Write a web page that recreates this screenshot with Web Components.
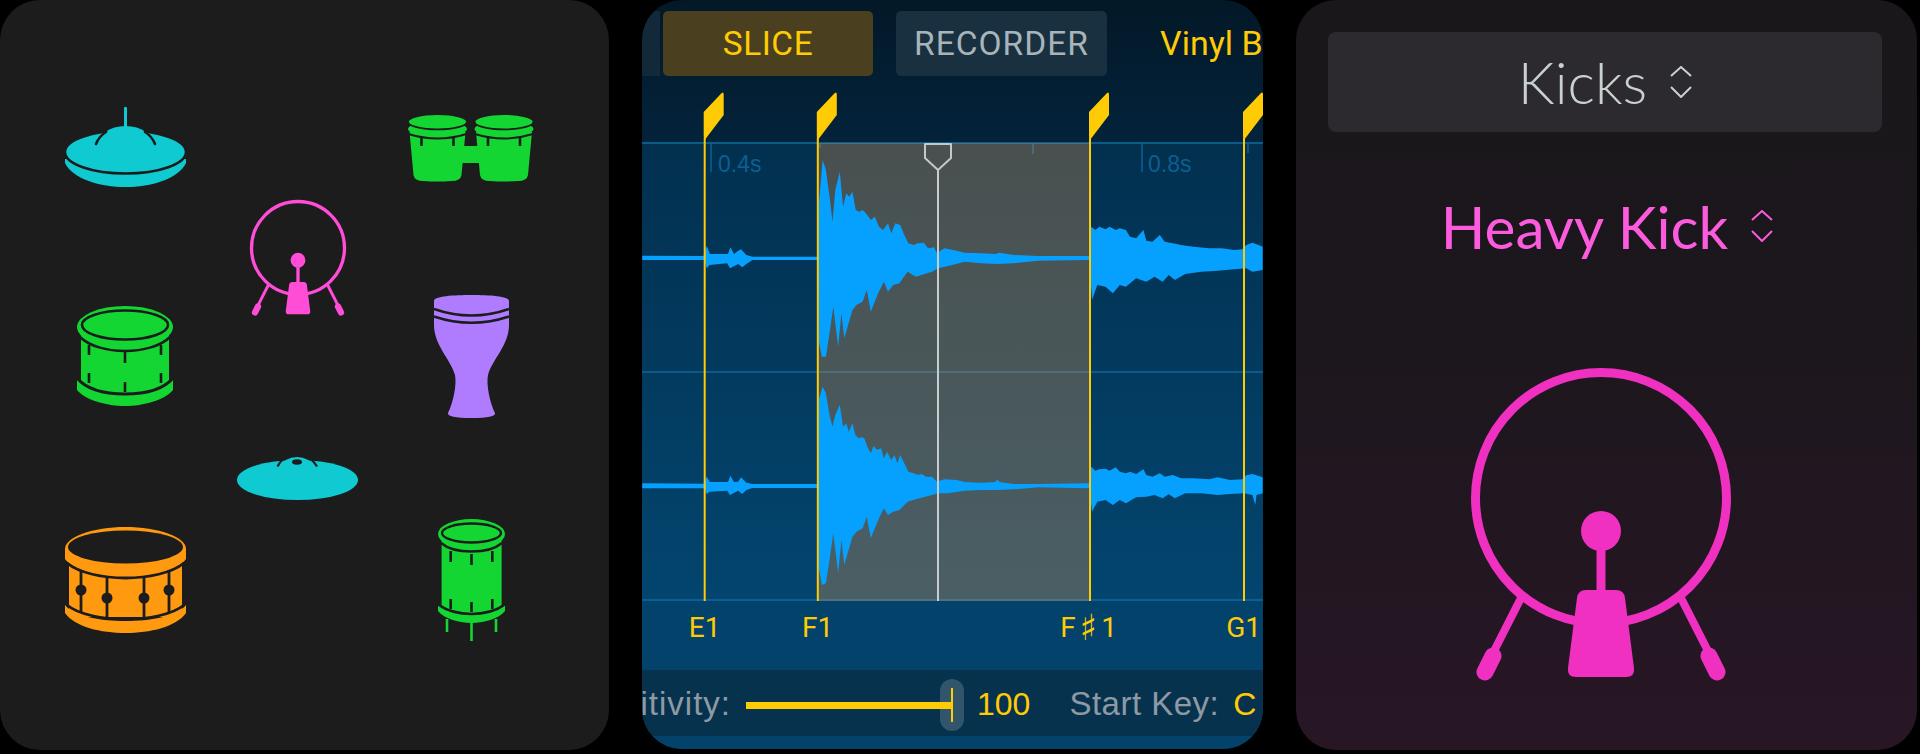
<!DOCTYPE html>
<html lang="en">
<head>
<meta charset="utf-8">
<title>Drum kit and sampler</title>
<style>
  html, body { margin: 0; background: #000; }
  body { width: 1920px; height: 754px; overflow: hidden; font-family: "Liberation Sans", sans-serif; }
  .row { display: flex; gap: 33px; }
</style>
</head>
<body>
<div class="row">
  <pad-panel>
    <pad-column slot="a" style="width:250px">
      <drum-icon kind="hihat" style="margin-top:107px"></drum-icon>
      <drum-icon kind="snare" style="margin-top:119px"></drum-icon>
      <drum-icon kind="marching" style="margin-top:121px"></drum-icon>
    </pad-column>
    <pad-column slot="b" style="width:95px">
      <kick-drum color="#ff4dd8" size="100" style="margin-top:198px"></kick-drum>
      <drum-icon kind="cymbal" style="margin-top:140px"></drum-icon>
    </pad-column>
    <pad-column slot="c" style="width:252px">
      <drum-icon kind="bongos" style="margin-top:114px"></drum-icon>
      <drum-icon kind="djembe" style="margin-top:113px"></drum-icon>
      <drum-icon kind="tom" style="margin-top:101px"></drum-icon>
    </pad-column>
  </pad-panel>
  <sampler-panel></sampler-panel>
  <kit-panel>
    <pick-label slot="group" text="Kicks" color="#c9d0d0" size="58" weight="300"></pick-label>
    <pick-label slot="name" text="Heavy Kick" color="#fb5bdc" size="58.5" weight="400"></pick-label>
    <kick-drum slot="drum" color="#ef30c0" size="270"></kick-drum>
  </kit-panel>
</div>

<script>
const BG = "#1c1c1c";
const TEAL = "#10cad2";
const GREEN = "#14d632";

const DRUMS = {
  hihat: { w: 121, h: 80, svg: `
    <path d="M0 52L121 52L121 56C113 72 86 80 60.5 80C35 80 8 72 0 56Z" fill="${TEAL}"/>
    <ellipse cx="60.5" cy="45" rx="60.5" ry="21.5" fill="${TEAL}" stroke="${BG}" stroke-width="2.6"/>
    <ellipse cx="60.5" cy="40" rx="29" ry="21" fill="${TEAL}"/>
    <path d="M31 37C33 32 36 28 41 25M90 37C88 32 85 28 80 25" fill="none" stroke="${BG}" stroke-width="2.6" stroke-linecap="round"/>
    <rect x="59" y="0" width="3" height="22" rx="1" fill="${TEAL}"/>` },
  snare: { w: 96, h: 100, svg: `
    <rect x="4" y="20" width="88" height="62" fill="${GREEN}"/>
    <path d="M0 74L0 84C8 94 30 100 48 100C66 100 88 94 96 84L96 74Z" fill="${GREEN}"/>
    <path d="M0 72C10 84 30 88 48 88C66 88 86 84 96 72" fill="none" stroke="${BG}" stroke-width="3"/>
    <ellipse cx="48" cy="21" rx="48" ry="21" fill="${GREEN}"/>
    <path d="M3 31C12 40 30 45 48 45C66 45 84 40 93 31" fill="none" stroke="${BG}" stroke-width="2.6"/>
    <ellipse cx="48" cy="19" rx="43" ry="14.5" fill="${GREEN}" stroke="${BG}" stroke-width="2.6"/>
    <path d="M12 39V49M48 44V57M84 39V49M12 67V77M48 76V86M84 67V77" stroke="${BG}" stroke-width="2.6"/>` },
  marching: { w: 121, h: 106, svg: `
    <path d="M4 30H117V90H4Z" fill="#ff9a10"/>
    <path d="M0 78C10 90 36 94 60.5 94C85 94 111 90 121 78V86C111 100 85 106 60.5 106C36 106 10 100 0 86Z" fill="#ff9a10"/>
    <path d="M0 22C0 10 28 0 60.5 0C93 0 121 10 121 22V32C115 42 85 48 60.5 48C36 48 6 42 0 32Z" fill="#ff9a10"/>
    <ellipse cx="60.5" cy="20" rx="57.5" ry="16.5" fill="${BG}"/>
    <path d="M2 36C14 46 38 51 60.5 51C83 51 107 46 119 36" fill="none" stroke="${BG}" stroke-width="2.8"/>
    <path d="M2 78C14 88 38 92 60.5 92C83 92 107 88 119 78" fill="none" stroke="${BG}" stroke-width="2.8"/>
    <path d="M16 43V85M42 49V90M79 49V90M104 43V85" stroke="${BG}" stroke-width="2.8"/>
    <circle cx="16" cy="63" r="5.5" fill="${BG}"/><circle cx="42" cy="71" r="5.5" fill="${BG}"/>
    <circle cx="79" cy="71" r="5.5" fill="${BG}"/><circle cx="104" cy="63" r="5.5" fill="${BG}"/>` },
  cymbal: { w: 121, h: 43, svg: `
    <ellipse cx="60.5" cy="23" rx="60.5" ry="20" fill="${TEAL}"/>
    <ellipse cx="60" cy="9" rx="15" ry="9" fill="${TEAL}"/>
    <path d="M40.5 9.5C42 6 44 4 46.5 2M80 9.5C78 6 76 4 73.5 2" fill="none" stroke="${BG}" stroke-width="2.2"/>
    <ellipse cx="60" cy="5" rx="5" ry="2.8" fill="${BG}"/>` },
  bongos: { w: 126, h: 68, svg: `
    <rect x="40" y="32" width="46" height="17" fill="${GREEN}"/>
    ${[29.5, 96].map(x => `<g transform="translate(${x} 0)">
      <path d="M-28 18L-24 61Q-23 67 -14 67Q0 68 14 67Q23 67 24 61L28 18Z" fill="${GREEN}"/>
      <ellipse cx="0" cy="15" rx="29.5" ry="8" fill="${GREEN}"/>
      <path d="M-29 20Q0 29 29 20" fill="none" stroke="${BG}" stroke-width="2"/>
      <ellipse cx="0" cy="7.7" rx="29.5" ry="7.7" fill="${GREEN}" stroke="${BG}" stroke-width="1.8"/>
      <path d="M-16 24V32M16 24V32" stroke="${BG}" stroke-width="2.6"/>
    </g>`).join("")}` },
  djembe: { w: 75, h: 123, svg: `
    <path d="M0 6C0 1 20 0 37.5 0C55 0 75 1 75 6L75 30C75 50 58 65 54 80C52 90 56 108 61 118Q62 123 37.5 123Q13 123 14 118C19 108 23 90 21 80C17 65 0 50 0 30Z" fill="#b07cff"/>
    <path d="M0 14Q37.5 27 75 14M0 21.5Q37.5 34 75 21.5" fill="none" stroke="${BG}" stroke-width="2.4"/>` },
  tom: { w: 67, h: 123, svg: `
    <path d="M9 100V113M33.5 100V122M58 100V113" stroke="${GREEN}" stroke-width="2.6"/>
    <rect x="3.6" y="14" width="60" height="76" fill="${GREEN}"/>
    <path d="M0 87L0 92C6 100 22 104 33.5 104C45 104 61 100 67 92L67 87Z" fill="${GREEN}"/>
    <path d="M0 85C8 92 22 95 33.5 95C45 95 59 92 67 85" fill="none" stroke="${BG}" stroke-width="2.6"/>
    <ellipse cx="33.5" cy="15" rx="33.5" ry="15" fill="${GREEN}"/>
    <path d="M3 24C10 30 22 32.5 33.5 32.5C45 32.5 57 30 64 24" fill="none" stroke="${BG}" stroke-width="2.4"/>
    <ellipse cx="33.5" cy="14" rx="29.5" ry="9.5" fill="${GREEN}" stroke="${BG}" stroke-width="2.4"/>
    <path d="M12.7 32V43M33.5 35V46M54.3 32V43M12.7 80V90M33.5 83V93M54.3 80V90" stroke="${BG}" stroke-width="2.6"/>` }
};

class DrumIcon extends HTMLElement {
  connectedCallback() {
    const d = DRUMS[this.getAttribute("kind")];
    this.attachShadow({ mode: "open" }).innerHTML = `
      <style>:host { display: block; flex: none; line-height: 0; }</style>
      <svg width="${d.w}" height="${d.h}" viewBox="0 0 ${d.w} ${d.h}" style="overflow:visible">${d.svg}</svg>`;
  }
}

class KickDrum extends HTMLElement {
  connectedCallback() {
    const color = this.getAttribute("color");
    const size = +this.getAttribute("size");
    this.attachShadow({ mode: "open" }).innerHTML = `
      <style>:host { display: block; flex: none; line-height: 0; }</style>
      <svg width="${size}" height="${size * 320 / 270}" viewBox="-135 -135 270 320">
        <circle cx="0" cy="0" r="125.5" fill="none" stroke="${color}" stroke-width="9"/>
        <circle cx="0" cy="33" r="20" fill="${color}"/>
        <rect x="-4.5" y="40" width="9" height="55" fill="${color}"/>
        <path d="M-15 92H15Q23 92 24 100L33 170Q34 179 25 179H-25Q-34 179 -33 170L-24 100Q-23 92 -15 92Z" fill="${color}"/>
        <path d="M-80 100L-108 155M80 100L108 155" stroke="${color}" stroke-width="8"/>
        <path d="M-108 158L-116 174M108 158L116 174" stroke="${color}" stroke-width="17" stroke-linecap="round"/>
      </svg>`;
  }
}

class PadColumn extends HTMLElement {
  constructor() {
    super();
    this.attachShadow({ mode: "open" }).innerHTML = `
      <style>:host { display: flex; flex-direction: column; align-items: center; flex: none; }</style>
      <slot></slot>`;
  }
}

class PadPanel extends HTMLElement {
  constructor() {
    super();
    this.attachShadow({ mode: "open" }).innerHTML = `
      <style>
        :host { display: flex; flex: none; width: 609px; height: 750px; background: #1c1c1c; border-radius: 40px; overflow: hidden; }
      </style>
      <slot name="a"></slot><slot name="b"></slot><slot name="c"></slot>`;
  }
}

// envelopes traced off the reference, x and y are in the crop's own units
const CH1 = "30,767 180,768 188,738 196,762 240,762 246,742 255,762 265,752 272,748 285,765 300,770 460,770 462,620 472,480 480,510 490,600 496,665 503,570 514,515 522,620 530,580 537,590 545,575 553,630 562,635 570,630 578,640 590,660 600,650 610,680 620,690 632,670 640,700 650,670 662,675 672,705 682,730 695,735 705,730 720,728 730,745 745,742 752,760 770,745 800,752 820,758 860,760 895,762 905,758 940,765 1000,768 1125,768 1130,680 1140,690 1150,680 1165,688 1175,680 1190,690 1200,685 1215,690 1225,710 1240,715 1258,690 1265,722 1280,725 1298,705 1310,725 1330,730 1350,735 1380,740 1420,745 1450,745 1480,750 1500,748 1510,735 1525,728 1540,735 1550,740 1550,810 1525,815 1510,805 1480,808 1440,812 1400,815 1360,822 1335,840 1320,825 1305,845 1285,830 1265,845 1240,835 1215,860 1200,855 1183,880 1165,860 1145,855 1132,900 1125,780 1000,782 940,790 900,792 860,790 820,785 780,798 755,805 740,815 700,830 680,815 660,850 645,855 632,875 622,845 608,880 590,935 580,870 570,905 555,915 545,930 525,1015 518,940 510,1040 498,920 490,990 480,1070 470,1070 462,1020 460,780 300,780 285,792 275,802 265,792 245,805 238,790 195,795 188,805 183,780 30,780";
const CH2 = "30,370 180,371 188,350 196,366 240,366 246,347 255,366 265,365 272,352 285,368 300,372 460,372 462,120 472,80 480,100 488,160 496,200 503,165 514,135 522,200 530,190 536,215 545,190 552,225 560,235 567,232 574,235 582,262 590,280 597,258 605,270 615,265 622,295 630,275 640,300 648,285 655,310 662,285 672,310 682,335 695,340 705,345 715,342 725,350 740,350 752,365 770,358 800,360 820,366 860,368 895,366 900,358 905,366 940,372 1000,372 1125,370 1130,320 1140,332 1150,328 1165,326 1175,332 1190,322 1200,335 1215,340 1225,335 1240,342 1258,328 1265,345 1280,350 1298,340 1310,350 1330,345 1350,355 1380,355 1420,358 1440,352 1470,360 1500,358 1510,346 1525,342 1550,352 1550,400 1535,405 1532,435 1525,405 1505,400 1470,402 1440,405 1400,400 1360,400 1335,415 1320,403 1305,415 1285,405 1265,410 1240,412 1215,430 1200,420 1183,435 1165,420 1145,425 1132,455 1125,385 1000,382 940,388 900,390 860,390 820,392 780,400 755,400 740,405 700,418 680,425 660,450 645,455 632,465 622,445 608,480 590,535 580,470 570,505 555,515 545,530 525,615 518,540 510,640 498,520 490,590 480,670 470,675 462,620 460,384 300,384 285,390 275,402 265,392 245,405 238,392 195,395 188,402 183,385 30,385";

class WaveView extends HTMLElement {
  connectedCallback() {
    const marks = [62.7, 175.8, 448, 602];
    const flag = x => `<path transform="translate(${x} 0)" d="M-1 24L17 5Q19 3.5 19 7L19 27L0 52L-1 49Z" fill="#ffcb05"/>
      <rect x="${x - 1}" y="50" width="2" height="463" fill="#ffcb05"/>`;
    this.attachShadow({ mode: "open" }).innerHTML = `
      <style>
        :host { display: block; height: 513px; line-height: 0; }
        text { font: 23px "Liberation Sans", sans-serif; fill: #0a5f92; }
      </style>
      <svg width="621" height="513" viewBox="0 0 621 513">
        <defs>
          <linearGradient id="well" x1="0" y1="0" x2="0" y2="1"><stop offset="0" stop-color="#02304f"/><stop offset="1" stop-color="#03456f"/></linearGradient>
        </defs>
        <rect x="0" y="55" width="621" height="458" fill="url(#well)"/>
        <rect x="0" y="54" width="621" height="2" fill="#0a5c8c"/>
        <rect x="0" y="283" width="621" height="2" fill="#0a5a8a"/>
        <rect x="0" y="511" width="621" height="2" fill="#0b5f95"/>
        <path d="M69 55V84M500 55V84M391 55V66M178 55V60M606 55V65" stroke="#0a5f92" stroke-width="1.6"/>
        <text x="76" y="84">0.4s</text>
        <text x="506" y="84">0.8s</text>
        <rect x="176" y="55" width="272" height="458" fill="rgb(240,155,80)" fill-opacity=".3"/>
        <polygon transform="translate(-12 -88) scale(.40816 .33333)" points="${CH1}" fill="#06a0ff"/>
        <polygon transform="translate(-12 272) scale(.40816 .33333)" points="${CH2}" fill="#06a0ff"/>
        ${marks.map(flag).join("")}
        <rect x="295" y="81" width="2" height="432" fill="#c8cccc"/>
        <path d="M283 56H309V70L296 82L283 70Z" fill="none" stroke="#c4c8c8" stroke-width="2" stroke-linejoin="round"/>
      </svg>`;
  }
}

class ToolTab extends HTMLElement {
  constructor() {
    super();
    this.attachShadow({ mode: "open" }).innerHTML = `
      <style>
        :host { display: flex; flex: none; align-items: center; justify-content: center; width: 211px; height: 65px; border-radius: 5px; font: 400 33.5px Roboto, sans-serif; letter-spacing: .5px; background: #18303f; color: #a9b4ba; }
        :host([active]) { background: #4a3f1f; color: #ffcb05; }
      </style>
      <slot></slot>`;
  }
}

class KeyStrip extends HTMLElement {
  constructor() {
    super();
    this.attachShadow({ mode: "open" }).innerHTML = `
      <style>
        :host { display: flex; flex: none; height: 69px; padding-top: 7px; box-sizing: border-box; font: 28px Roboto, sans-serif; color: #ffcb05; }
      </style>
      <slot></slot>`;
  }
}

class KeyMark extends HTMLElement {
  constructor() {
    super();
    this.attachShadow({ mode: "open" }).innerHTML = `
      <style>
        :host { display: flex; justify-content: center; flex: none; width: 0; white-space: nowrap; line-height: 40px; }
      </style>
      <slot></slot>`;
  }
}

class LevelSlider extends HTMLElement {
  constructor() {
    super();
    this.attachShadow({ mode: "open" }).innerHTML = `
      <style>
        :host { display: flex; align-items: center; position: relative; flex: none; width: 218px; height: 52px; margin-top: 4px; }
        .fill { position: relative; z-index: 1; width: 207px; height: 7px; background: #ffcb05; }
        .thumb { position: absolute; left: 194px; top: 0; width: 24px; height: 52px; border-radius: 12px; background: #31566b; display: flex; align-items: center; justify-content: center; }
        .thumb i { display: block; width: 2px; height: 34px; background: #ffcb05; }
      </style>
      <div class="thumb"><i></i></div><div class="fill"></div>`;
  }
}

class SamplerPanel extends HTMLElement {
  connectedCallback() {
    this.attachShadow({ mode: "open" }).innerHTML = `
      <style>
        :host { display: flex; flex-direction: column; flex: none; width: 621px; height: 749px; border-radius: 40px; overflow: hidden; background: linear-gradient(#031827, #03233b 19%, #03426a 80%); }
        .tabs { display: flex; flex: none; height: 88px; padding-top: 11px; box-sizing: border-box; }
        .sliver { flex: none; width: 18px; height: 65px; margin-right: 3px; background: #12293a; }
        .sample { flex: none; margin-left: 53px; font: 400 34px/65px Roboto, sans-serif; color: #ffcb05; white-space: nowrap; }
        key-strip { background: #03426a; }
        .bar { display: flex; align-items: center; flex: none; height: 66px; background: #07324e; font: 33px/66px "Liberation Sans", sans-serif; color: #8e9aa3; white-space: nowrap; }
        .bar span { position: relative; top: 1px; }
        .clip { display: flex; justify-content: flex-end; flex: none; width: 89px; margin-right: 15px; letter-spacing: 1px; }
        .key { letter-spacing: .5px; }
        .val { color: #ffcb05; font-size: 32px; }
        .foot { flex: 1; background: #03426a; }
        .sharp { font: 36px "DejaVu Sans", sans-serif; margin: 0 4px; line-height: 40px; }
      </style>
      <div class="tabs">
        <div class="sliver"></div>
        <tool-tab active style="width:210px;margin-right:23px">SLICE</tool-tab>
        <tool-tab style="letter-spacing:1px">RECORDER</tool-tab>
        <div class="sample">Vinyl B</div>
      </div>
      <wave-view></wave-view>
      <key-strip>
        <key-mark style="margin-left:62.7px">E1</key-mark>
        <key-mark style="margin-left:113px">F1</key-mark>
        <key-mark style="margin-left:271px">F<span class="sharp">♯</span>1</key-mark>
        <key-mark style="margin-left:155px">G1</key-mark>
      </key-strip>
      <div class="bar">
        <div class="clip"><span>itivity:</span></div>
        <level-slider></level-slider>
        <span class="val" style="margin-left:13px">100</span>
        <span class="key" style="margin-left:39px">Start Key:</span>
        <span class="val" style="margin-left:14px">C</span>
      </div>
      <div class="foot"></div>`;
  }
}

class PickLabel extends HTMLElement {
  connectedCallback() {
    const color = this.getAttribute("color");
    const font = `${this.getAttribute("weight")} ${this.getAttribute("size")}px/1 Lato, sans-serif`;
    this.attachShadow({ mode: "open" }).innerHTML = `
      <style>
        :host { display: flex; align-items: center; justify-content: center; gap: 23px; font: ${font}; color: ${color}; }
        svg { flex: none; }
      </style>
      <span>${this.getAttribute("text")}</span>
      <svg width="22" height="32" viewBox="0 0 22 32"><path d="M1 10L11 1L21 10M1 21L11 31L21 21" fill="none" stroke="${color}" stroke-width="2"/></svg>`;
  }
}

class KitPanel extends HTMLElement {
  constructor() {
    super();
    this.attachShadow({ mode: "open" }).innerHTML = `
      <style>
        :host { display: flex; flex-direction: column; align-items: center; flex: none; width: 621px; height: 750px; box-sizing: border-box; padding-top: 32px; border-radius: 40px; overflow: hidden; background: linear-gradient(#1a171b, #1b171c 40%, #281625); }
        .box { display: flex; align-items: center; justify-content: center; width: 554px; height: 100px; margin-right: 3px; border-radius: 8px; background: #2c2a2e; }
        .name { margin-top: 64px; margin-left: 1px; height: 60px; display: flex; align-items: center; }
        .drum { margin-top: 107px; margin-right: 12px; }
      </style>
      <div class="box"><slot name="group"></slot></div>
      <div class="name"><slot name="name"></slot></div>
      <div class="drum"><slot name="drum"></slot></div>`;
  }
}

customElements.define("drum-icon", DrumIcon);
customElements.define("kick-drum", KickDrum);
customElements.define("pad-column", PadColumn);
customElements.define("pad-panel", PadPanel);
customElements.define("wave-view", WaveView);
customElements.define("tool-tab", ToolTab);
customElements.define("key-strip", KeyStrip);
customElements.define("key-mark", KeyMark);
customElements.define("level-slider", LevelSlider);
customElements.define("sampler-panel", SamplerPanel);
customElements.define("pick-label", PickLabel);
customElements.define("kit-panel", KitPanel);
</script>
</body>
</html>
